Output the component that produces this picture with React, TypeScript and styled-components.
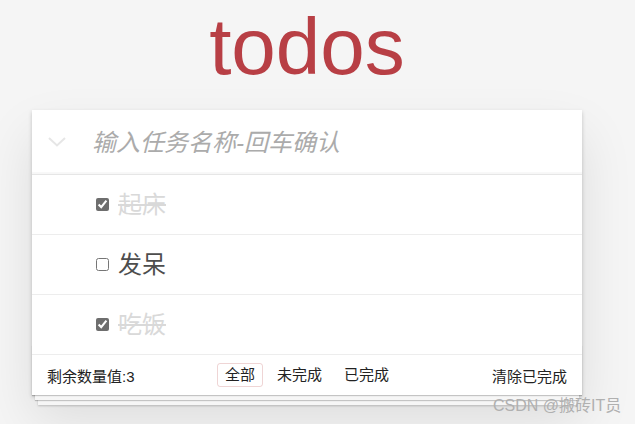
import React from "react";
import styled, { createGlobalStyle } from "styled-components";

const Global = createGlobalStyle`
  html, body { margin: 0; padding: 0; background: #f5f5f5; overflow: hidden; }
  body { font-family: "Liberation Sans", "Noto Sans CJK SC", sans-serif; color: #4d4d4d; }
  * { box-sizing: border-box; }
`;

const Page = styled.div`
  position: relative;
  width: 635px;
  height: 424px;
  padding-right: 21px;
  display: flex;
  flex-direction: column;
  align-items: center;
`;

const Title = styled.h1`
  margin: 7px 0 23px;
  font-family: "Liberation Sans", Arial, sans-serif;
  font-weight: 400;
  font-size: 80px;
  line-height: 80px;
  color: #b83f45;
`;

const Card = styled.section`
  position: relative;
  z-index: 0;
  width: 550px;
  background: #fff;
  box-shadow: 0 2px 4px rgba(0, 0, 0, 0.2), 0 25px 50px rgba(0, 0, 0, 0.1);
`;

const HeaderRow = styled.div`
  display: flex;
  align-items: center;
  height: 65px;
  border-bottom: 1px solid #e6e6e6;
  box-shadow: inset 0 -2px 1px rgba(0, 0, 0, 0.03);
`;

const ToggleCell = styled.div`
  width: 60px;
  padding-left: 16px;
  display: flex;
  align-items: center;
  height: 100%;
`;

const NewInput = styled.input`
  flex: 1;
  border: none;
  outline: none;
  background: transparent;
  padding: 16px 16px 16px 0;
  font-size: 24px;
  line-height: 33px;
  font-family: "Liberation Sans", "Noto Sans CJK SC", sans-serif;
  color: #4d4d4d;
  &::placeholder {
    font-style: italic;
    color: #ababab;
  }
`;

const List = styled.ul`
  list-style: none;
  margin: 0;
  padding: 0;
`;

const Item = styled.li`
  display: flex;
  align-items: center;
  gap: 9px;
  height: 60px;
  padding-left: 64px;
  border-bottom: 1px solid #ededed;
`;

const Check = styled.input`
  margin: 0;
  width: 13px;
  height: 13px;
  accent-color: #6e6e6e;
`;

const Label = styled.span<{ $done: boolean }>`
  font-size: 24px;
  line-height: 30px;
  font-family: "Liberation Sans", "Noto Sans CJK SC", sans-serif;
  color: ${(p) => (p.$done ? "#d9d9d9" : "#4d4d4d")};
  text-decoration: ${(p) => (p.$done ? "line-through" : "none")};
`;

const Footer = styled.footer`
  position: relative;
  display: grid;
  grid-template-columns: 1fr auto 1fr;
  align-items: center;
  height: 40px;
  padding: 0 15px;
  font-size: 15px;
  color: #222;
  &::before {
    content: "";
    position: absolute;
    left: 0;
    right: 0;
    bottom: 0;
    height: 50px;
    z-index: -1;
    box-shadow: 0 1px 1px rgba(0, 0, 0, 0.2), 0 8px 0 -3px #f6f6f6,
      0 9px 1px -3px rgba(0, 0, 0, 0.2), 0 16px 0 -6px #f6f6f6,
      0 17px 2px -6px rgba(0, 0, 0, 0.2);
  }
`;

const Count = styled.span`
  justify-self: start;
`;

const Filters = styled.ul`
  list-style: none;
  margin: 0;
  padding: 0;
  display: flex;
`;

const FilterLink = styled.a<{ $selected?: boolean }>`
  display: block;
  margin: 3px;
  padding: 3px 7px;
  line-height: 16px;
  border: 1px solid ${(p) => (p.$selected ? "rgba(175, 47, 47, 0.2)" : "transparent")};
  border-radius: 3px;
  color: inherit;
  text-decoration: none;
`;

const Clear = styled.button`
  justify-self: end;
  border: none;
  background: none;
  padding: 0;
  font: inherit;
  color: inherit;
`;

const Watermark = styled.div`
  position: absolute;
  left: 493px;
  top: 396px;
  font-size: 16px;
  line-height: 20px;
  color: #b0b0b0;
  font-family: "Liberation Sans", "Noto Sans CJK SC", sans-serif;
`;

const todos = [
  { text: "起床", done: true },
  { text: "发呆", done: false },
  { text: "吃饭", done: true },
];

export default function App() {
  return (
    <Page>
      <Global />
      <Title>todos</Title>
      <Card>
        <HeaderRow>
          <ToggleCell>
            <svg width="18" height="10" viewBox="0 0 18 10">
              <path d="M1 1 L9 8.5 L17 1" fill="none" stroke="#e6e6e6" strokeWidth="2" />
            </svg>
          </ToggleCell>
          <NewInput placeholder="输入任务名称-回车确认" />
        </HeaderRow>
        <List>
          {todos.map((t) => (
            <Item key={t.text}>
              <Check type="checkbox" defaultChecked={t.done} />
              <Label $done={t.done}>{t.text}</Label>
            </Item>
          ))}
        </List>
        <Footer>
          <Count>剩余数量值:3</Count>
          <Filters>
            <li><FilterLink $selected>全部</FilterLink></li>
            <li><FilterLink>未完成</FilterLink></li>
            <li><FilterLink>已完成</FilterLink></li>
          </Filters>
          <Clear>清除已完成</Clear>
        </Footer>
      </Card>
      <Watermark>CSDN @搬砖IT员</Watermark>
    </Page>
  );
}
